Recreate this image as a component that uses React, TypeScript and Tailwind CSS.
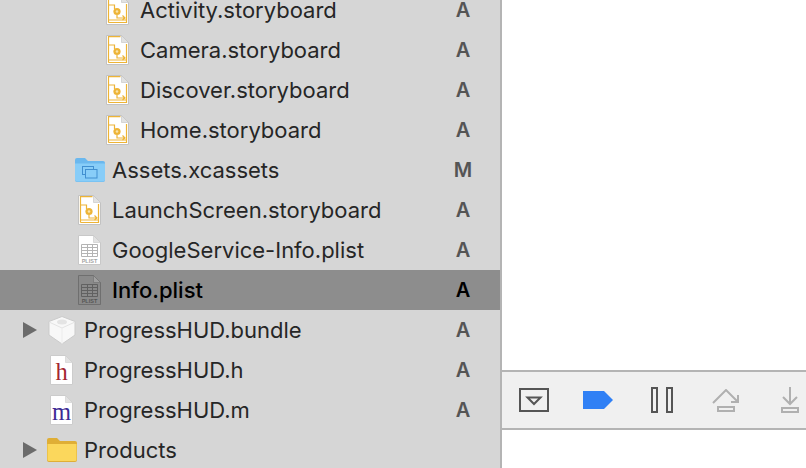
import type { ReactNode } from "react";

function Page({ tint = "#ffffff", edge = "#c2c2c2", children }: { tint?: string; edge?: string; children?: ReactNode }) {
  return (
    <svg width="23" height="30" viewBox="0 0 23 30" className="ml-[3px] block">
      <path d="M0.5 0.5H15.5L22.5 7.5V29.5H0.5Z" fill={tint} stroke={edge} />
      <path d="M15.5 0.5V7.5H22.5Z" fill={tint === "#ffffff" ? "#e2e2e2" : "#a0a0a0"} stroke={edge} strokeWidth="0.6" />
      {children}
    </svg>
  );
}

function StoryboardIcon() {
  return (
    <Page>
      <g fill="none" stroke="#edb437" strokeWidth="1.2">
        <path d="M2.5 27.5V1.6H14.5" />
        <path d="M2.5 25H20.5M2.5 27.5H20.5V9" />
        <path d="M2.5 10H8.5V14" />
        <path d="M11 20V23H19M16.5 20.5L19 23L16.5 25" />
      </g>
      <circle cx="11" cy="16.5" r="3.6" fill="#edb437" />
      <circle cx="11" cy="16.5" r="1.3" fill="#f9e2a8" />
    </Page>
  );
}

function PlistIcon({ dark = false }: { dark?: boolean }) {
  const line = dark ? "#616161" : "#b4b4b4";
  const text = dark ? "#555555" : "#a3a3a3";
  return (
    <Page tint={dark ? "#8a8a8a" : "#ffffff"} edge={dark ? "#6f6f6f" : "#c8c8c8"}>
      <g fill="none" stroke={line} strokeWidth="1">
        <path d="M3.5 9.5H19.5V21.5H3.5Z" />
        <path d="M3.5 12.5H19.5M3.5 15.5H19.5M3.5 18.5H19.5M9.5 9.5V21.5M14.5 9.5V21.5" />
      </g>
      <text x="11.5" y="28" textAnchor="middle" fontSize="5.5" fontWeight="700" fill={text} fontFamily="Liberation Sans, sans-serif">
        PLIST
      </text>
    </Page>
  );
}

function SourceIcon({ letter, color }: { letter: string; color: string }) {
  return (
    <Page edge="#cccccc">
      <text x="11.5" y="25" textAnchor="middle" fontSize="24.5" fill={color} fontFamily="Liberation Serif, serif">
        {letter}
      </text>
    </Page>
  );
}

function AssetsFolder() {
  return (
    <svg width="30" height="24" viewBox="0 0 30 24" className="block">
      <path d="M0 2Q0 0 2 0H10L13 3H28Q30 3 30 5V22Q30 24 28 24H2Q0 24 0 22Z" fill="#6bb8ee" />
      <path d="M0 5.5H30V21.5Q30 23.5 28 23.5H2Q0 23.5 0 21.5Z" fill="#88cdf8" />
      <g fill="none" stroke="#418fd0" strokeWidth="1">
        <rect x="7.5" y="8.5" width="11" height="8" />
        <rect x="10.5" y="11.5" width="11.5" height="8.5" fill="#88cdf8" />
      </g>
    </svg>
  );
}

function YellowFolder() {
  return (
    <svg width="30" height="24" viewBox="0 0 30 24" className="block">
      <path d="M0 2Q0 0 2 0H10L13 3H28Q30 3 30 5V22Q30 24 28 24H2Q0 24 0 22Z" fill="#dfae36" />
      <path d="M0.5 6H29.5V21.5Q29.5 23 28 23H2Q0.5 23 0.5 21.5Z" fill="#fbd75c" />
    </svg>
  );
}

function BundleIcon() {
  return (
    <svg width="30" height="30" viewBox="0 0 30 30" className="block">
      <path d="M15 1.5L28 6.5V20L15 29L2 20V6.5Z" fill="#f8f8f8" stroke="#cbcbcb" />
      <path d="M2 7L15 13L28 7" fill="none" stroke="#e4e4e4" />
      <path d="M15 13V29" fill="none" stroke="#ececec" />
      <ellipse cx="15" cy="7" rx="5" ry="2.5" fill="#e4e4e4" />
    </svg>
  );
}

function Triangle() {
  return (
    <svg width="14" height="16" viewBox="0 0 14 16" className="block">
      <path d="M0 0L14 8L0 16Z" fill="#6b6b6b" />
    </svg>
  );
}

function Row({
  depth,
  icon,
  name,
  status,
  open,
  selected,
}: {
  depth: 0 | 1 | 2;
  icon: ReactNode;
  name: string;
  status: string;
  open?: boolean;
  selected?: boolean;
}) {
  return (
    <div className={`flex h-10 shrink-0 items-center pr-[27px] ${selected ? "bg-[#8d8d8d]" : ""}`}>
      {depth === 0 && (
        <div className="ml-[23px] w-6 shrink-0">{open && <Triangle />}</div>
      )}
      {depth === 1 && <div className="w-[75px] shrink-0" />}
      {depth === 2 && <div className="w-[103px] shrink-0" />}
      <div className="flex w-[30px] shrink-0 justify-start">{icon}</div>
      <div className={`ml-[7px] flex-1 text-[22px] ${selected ? "font-medium text-black" : "text-[#262626]"}`}>{name}</div>
      <div className={`w-5 text-center text-[20px] font-semibold ${selected ? "text-black" : "text-[#555555]"}`}>{status}</div>
    </div>
  );
}

function ConsoleToggle() {
  return (
    <svg width="30" height="24" viewBox="0 0 30 24" fill="none" stroke="#555555" strokeWidth="2">
      <rect x="1" y="1" width="28" height="22" />
      <path d="M8.5 9.5H21.5L15 16Z" />
    </svg>
  );
}

function BreakpointTag() {
  return (
    <svg width="30" height="18" viewBox="0 0 30 18">
      <path d="M0 0H21L30 9L21 18H0Z" fill="#3080f5" />
    </svg>
  );
}

function PauseIcon() {
  return (
    <svg width="22" height="26" viewBox="0 0 22 26" fill="none" stroke="#555555" strokeWidth="2">
      <rect x="1" y="1" width="5" height="24" />
      <rect x="16" y="1" width="5" height="24" />
    </svg>
  );
}

function StepOverIcon() {
  return (
    <svg width="28" height="23" viewBox="0 0 28 23" fill="none" stroke="#b0b0b0" strokeWidth="2">
      <path d="M1 14L14 1L26 13" />
      <path d="M19 13H26V6" />
      <rect x="6" y="18" width="16" height="4" />
    </svg>
  );
}

function StepIntoIcon() {
  return (
    <svg width="18" height="26" viewBox="0 0 18 26" fill="none" stroke="#b0b0b0" strokeWidth="2">
      <path d="M9 0V17" />
      <path d="M2 10L9 17L16 10" />
      <rect x="1" y="21" width="16" height="4" />
    </svg>
  );
}

export default function App() {
  return (
    <div className="flex h-[468px] w-[806px] overflow-hidden bg-white font-['Inter',sans-serif]">
      {/* Navigator */}
      <div className="flex w-[500px] shrink-0 flex-col bg-[#d6d6d6]">
        <div className="-mt-[10px]" />
        <Row depth={2} icon={<StoryboardIcon />} name="Activity.storyboard" status="A" />
        <Row depth={2} icon={<StoryboardIcon />} name="Camera.storyboard" status="A" />
        <Row depth={2} icon={<StoryboardIcon />} name="Discover.storyboard" status="A" />
        <Row depth={2} icon={<StoryboardIcon />} name="Home.storyboard" status="A" />
        <Row depth={1} icon={<AssetsFolder />} name="Assets.xcassets" status="M" />
        <Row depth={1} icon={<StoryboardIcon />} name="LaunchScreen.storyboard" status="A" />
        <Row depth={1} icon={<PlistIcon />} name="GoogleService-Info.plist" status="A" />
        <Row depth={1} icon={<PlistIcon dark />} name="Info.plist" status="A" selected />
        <Row depth={0} open icon={<BundleIcon />} name="ProgressHUD.bundle" status="A" />
        <Row depth={0} icon={<SourceIcon letter="h" color="#a3262f" />} name="ProgressHUD.h" status="A" />
        <Row depth={0} icon={<SourceIcon letter="m" color="#3d2a94" />} name="ProgressHUD.m" status="A" />
        <Row depth={0} open icon={<YellowFolder />} name="Products" status="" />
      </div>

      {/* Editor and debug bar */}
      <div className="flex min-w-0 flex-1 flex-col border-l-2 border-[#b4b4b4]">
        <div className="h-[370px] shrink-0 bg-white" />
        <div className="flex h-[60px] shrink-0 items-center border-y-2 border-[#b4b4b4] bg-[#f0f0f0] pl-[17px]">
          <ConsoleToggle />
          <div className="ml-[34px]"><BreakpointTag /></div>
          <div className="ml-[38px]"><PauseIcon /></div>
          <div className="ml-[39px]"><StepOverIcon /></div>
          <div className="ml-[41px]"><StepIntoIcon /></div>
        </div>
        <div className="flex-1 bg-white" />
      </div>
    </div>
  );
}
